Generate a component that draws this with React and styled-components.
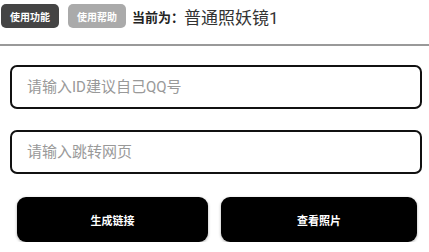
import React from 'react';
import styled, { createGlobalStyle } from 'styled-components';

const GlobalStyle = createGlobalStyle`
  html, body {
    margin: 0;
    padding: 0;
    background: #fff;
    font-family: Roboto, "Noto Sans CJK SC", sans-serif;
  }
`;

const Page = styled.div`
  width: 429px;
`;

const Header = styled.div`
  display: flex;
  align-items: center;
  height: 32px;
  padding-left: 1px;
`;

const TabButton = styled.button`
  height: 24px;
  width: 58px;
  margin-right: ${(p) => p.gap || 9}px;
  border: none;
  border-radius: 5px;
  background: ${(p) => (p.active ? '#444' : '#aaa')};
  color: #fff;
  font-family: inherit;
  font-size: 10px;
  font-weight: 700;
  padding: 0;
`;

const Label = styled.span`
  font-size: 13px;
  font-weight: 700;
  color: #222;
  margin-left: -2px;
`;

const Current = styled.span`
  font-size: 17px;
  color: #333;
`;

const Divider = styled.div`
  height: 2px;
  margin-top: 12px;
  background: #999;
`;

const Form = styled.div`
  display: flex;
  flex-direction: column;
  gap: 21px;
  padding: 19px 7px 0 10px;
`;

const Field = styled.input`
  box-sizing: border-box;
  height: 44px;
  width: 100%;
  border: 2px solid #111;
  border-radius: 7px;
  padding: 0 15px;
  font-family: inherit;
  font-size: 15px;
  outline: none;
  &::placeholder {
    color: #999;
  }
`;

const Actions = styled.div`
  display: grid;
  grid-template-columns: 191px 196px;
  gap: 13px;
  padding: 23px 0 0 17px;
`;

const ActionButton = styled.button`
  height: 45px;
  border: none;
  border-radius: 9px;
  background: #000;
  color: #fff;
  font-family: inherit;
  font-size: 11px;
  font-weight: 700;
  box-shadow: 0 1px 3px rgba(0, 0, 0, 0.35);
`;

export default function App() {
  return (
    <Page>
      <GlobalStyle />
      <Header>
        <TabButton active>使用功能</TabButton>
        <TabButton gap={8}>使用帮助</TabButton>
        <Label>当前为：</Label>
        <Current>普通照妖镜1</Current>
      </Header>
      <Divider />
      <Form>
        <Field placeholder="请输入ID建议自己QQ号" />
        <Field placeholder="请输入跳转网页" />
      </Form>
      <Actions>
        <ActionButton>生成链接</ActionButton>
        <ActionButton>查看照片</ActionButton>
      </Actions>
    </Page>
  );
}
